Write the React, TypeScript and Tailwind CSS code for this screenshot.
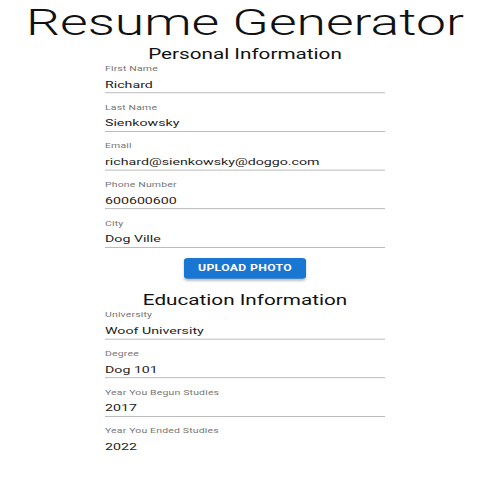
import React from 'react'

type Field = { label: string; value: string; underline?: boolean }

const personal: Field[] = [
  { label: 'First Name', value: 'Richard' },
  { label: 'Last Name', value: 'Sienkowsky' },
  { label: 'Email', value: 'richard@sienkowsky@doggo.com' },
  { label: 'Phone Number', value: '600600600' },
  { label: 'City', value: 'Dog Ville' },
]

const education: Field[] = [
  { label: 'University', value: 'Woof University' },
  { label: 'Degree', value: 'Dog 101' },
  { label: 'Year You Begun Studies', value: '2017' },
  { label: 'Year You Ended Studies', value: '2022', underline: false },
]

function TextField({ field, first }: { field: Field; first?: boolean }) {
  const underline = field.underline !== false
  return (
    <div
      className={`${first ? 'pt-[3.5px]' : 'pt-[15px]'} pb-[2px] ${
        underline ? 'border-b-[1.5px] border-[#9e9e9e]' : 'border-b-[1.5px] border-transparent'
      }`}
    >
      <div className="text-[10.5px] leading-[12px] text-[#777] tracking-[0.15px]">{field.label}</div>
      <div className="mt-[6px] text-[14.2px] leading-[20px] text-[#222]">{field.value}</div>
    </div>
  )
}

export default function App() {
  return (
    <div className="h-[480px] overflow-hidden bg-white">
      {/* screenshot is squashed vertically, so lay out tall and scale down */}
      <div className="origin-top scale-y-[0.69] pl-[10px] font-['Roboto',sans-serif]">
        <h1 className="pt-[5px] text-center text-[53.5px] leading-[56px] font-light text-[#111]">
          Resume Generator
        </h1>

        <div className="mx-auto w-[280px]">
          <h2 className="mt-[5px] text-center text-[20.7px] leading-[24px] text-[#111]">
            Personal Information
          </h2>
          {personal.map((f, i) => (
            <TextField key={f.label} field={f} first={i === 0} />
          ))}

          <div className="mt-[15px] flex justify-center">
            <button className="h-[30.4px] w-[122px] rounded-[4px] bg-[#1976d2] text-[12.2px] font-bold uppercase tracking-[0.35px] text-white shadow-[0_2px_3px_rgba(0,0,0,0.25)]">
              Upload Photo
            </button>
          </div>

          <h2 className="mt-[19.5px] text-center text-[20.7px] leading-[24px] text-[#111]">
            Education Information
          </h2>
          {education.map((f, i) => (
            <TextField key={f.label} field={f} first={i === 0} />
          ))}
        </div>
      </div>
    </div>
  )
}
